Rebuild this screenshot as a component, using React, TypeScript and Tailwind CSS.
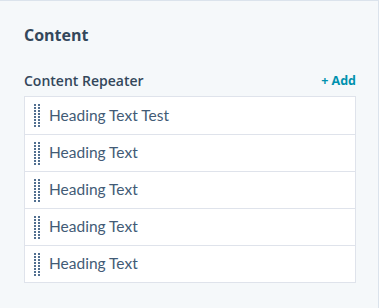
const items = [
  "Heading Text Test",
  "Heading Text",
  "Heading Text",
  "Heading Text",
  "Heading Text",
];

function DragHandle() {
  return (
    <svg width="6" height="23" viewBox="0 0 6 23" className="shrink-0">
      {Array.from({ length: 8 }).map((_, i) => (
        <g key={i} fill="#516f90">
          <rect x="0" y={i * 3} width="2" height="2" />
          <rect x="4" y={i * 3} width="2" height="2" />
        </g>
      ))}
    </svg>
  );
}

export default function App() {
  return (
    <div className="w-[379px] h-[308px] bg-[#f5f8fa] border-t border-r border-[#dbe3ec] pl-6 pr-[22px] pt-[23px] font-['Open_Sans',sans-serif] text-[#33475b]">
      <h2 className="text-[16px] leading-[22px] font-bold">Content</h2>
      <div className="mt-[25px] flex items-end justify-between">
        <span className="text-[14px] leading-[20px] font-semibold">
          Content Repeater
        </span>
        <button className="text-[12.5px] leading-[20px] font-bold text-[#0091ae]">
          + Add
        </button>
      </div>
      <ul className="mt-[5px] w-full border border-[#dfe3eb] bg-white">
        {items.map((t, i) => (
          <li
            key={i}
            className="h-[37px] flex items-center gap-[9px] pl-[9px] border-t border-[#dfe3eb] first:border-t-0"
          >
            <DragHandle />
            <span className="font-['Lato',sans-serif] text-[15.5px] text-[#425b76]">
              {t}
            </span>
          </li>
        ))}
      </ul>
    </div>
  );
}
